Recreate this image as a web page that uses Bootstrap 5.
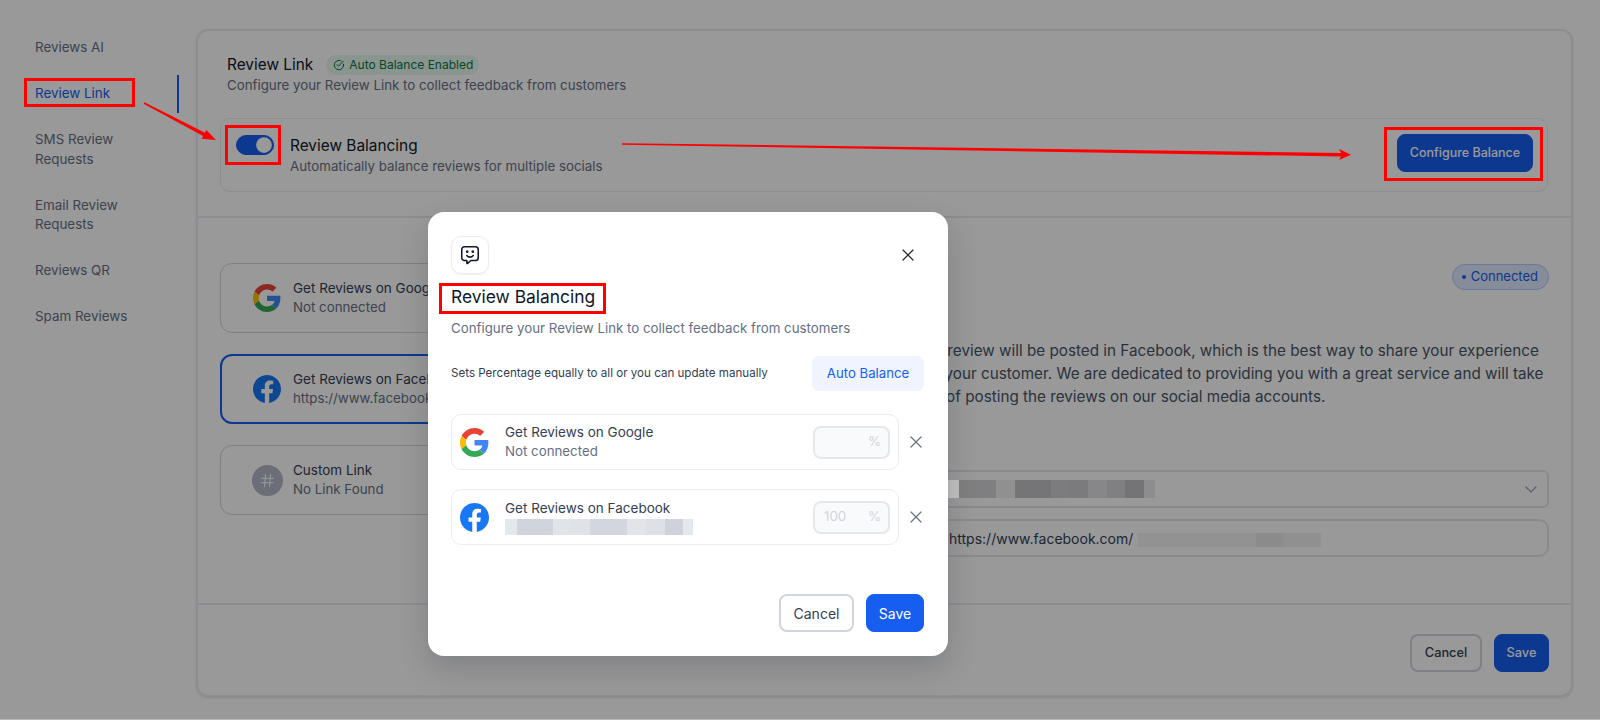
<!DOCTYPE html>
<html lang="en">
<head>
  <meta charset="UTF-8">
  <title>Review Balancing</title>
  <meta name="viewport" content="width=device-width, initial-scale=1">
  <link href="https://cdn.jsdelivr.net/npm/bootstrap@5.3.0/dist/css/bootstrap.min.css" rel="stylesheet">
  <style>
    body {
      font-family: "Inter", "Liberation Sans", sans-serif;
      background: #fff;
      height: 720px;
      overflow: hidden;
      position: relative;
      color: #101828;
    }
    /* sidebar */
    .side-col { width: 196px; flex: none; padding: 29px 17px 0 35px; gap: 8.5px; }
    .side-col .nav-link {
      padding: 9px 34px 9px 0;
      font-size: 13.4px;
      line-height: 19.5px;
      font-weight: 400;
      color: #667085;
      border-right: 2px solid transparent;
    }
    .side-col .nav-link.active { color: #155eef; border-right-color: #155eef; }
    /* main panel */
    .main-panel {
      width: 1377px;
      height: 668px;
      margin-top: 29px;
      border: 2px solid #eaecf0;
      border-radius: 12px;
      box-shadow: 0 1px 2px rgba(16, 24, 40, .12);
    }
    .top-part { padding: 24px 23px 24px 22px; border-bottom: 2px solid #eaecf0; }
    .head-title { font-size: 15.4px; line-height: 20px; font-weight: 400; margin-left: 7px; }
    .head-sub { font-size: 13.3px; line-height: 20px; color: #667085; margin-left: 7px; }
    .auto-pill {
      height: 20px;
      padding: 0 6px 0 7px;
      margin-left: 13px;
      font-size: 12px;
      font-weight: 400;
      border-radius: 10px;
      background: #e8f8ee;
      color: #067647;
    }
    .balance-box {
      height: 74px;
      margin-top: 23px;
      padding: 0 14px 0 15px;
      border: 1px solid #eaecf0;
      border-radius: 10px;
    }
    .balance-box .form-check-input {
      width: 38px;
      height: 20px;
      margin: 0 16px 20px 0;
      float: none;
      background-color: #155eef;
      border-color: #155eef;
    }
    .balance-box .form-switch .form-check-input:checked {
      --bs-form-switch-bg: url("data:image/svg+xml,%3csvg xmlns='http://www.w3.org/2000/svg' viewBox='-4 -4 8 8'%3e%3ccircle r='3.5' fill='%23fff'/%3e%3c/svg%3e");
    }
    .balance-box .form-switch { padding: 0; min-height: 0; margin: 0; }
    .bal-text { margin-top: 2px; }
    .bal-title { font-size: 15.4px; line-height: 21px; font-weight: 400; }
    .bal-sub { font-size: 13.3px; line-height: 21px; color: #667085; }
    .btn-blue {
      background: #155eef;
      border: 1px solid #155eef;
      color: #fff;
      font-size: 14px;
      font-weight: 500;
      height: 38px;
      border-radius: 8px;
      padding: 0;
    }
    .btn-plain {
      background: #fff;
      border: 2px solid #d0d5dd;
      color: #344054;
      font-size: 14px;
      font-weight: 500;
      height: 38px;
      border-radius: 8px;
      padding: 0;
    }
    .btn-config { width: 136px; font-size: 12.5px; margin-bottom: 4px; }
    .mid-part { padding: 45px 22px 0 22px; gap: 20px; }
    .left-list { width: 668px; flex: none; gap: 21px; }
    .src-card {
      height: 70px;
      padding-left: 30px;
      gap: 10px;
      border: 1px solid #d0d5dd;
      border-radius: 12px;
    }
    .src-card.picked { border: 2px solid #155eef; padding-left: 29px; }
    .icon-slot { width: 32px; flex: none; }
    .src-name { font-size: 13.5px; line-height: 19px; font-weight: 400; color: #344054; }
    .src-info { font-size: 13.3px; line-height: 19px; color: #667085; }
    .hash-dot { width: 31px; height: 31px; border-radius: 50%; background: #b3b8c5; }
    .right-col { flex: 1; min-width: 0; padding-top: 1px; }
    .conn-pill {
      height: 26px;
      padding: 0 10px 0 9px;
      font-size: 13px;
      font-weight: 400;
      border-radius: 13px;
      background: #e0e9ff;
      border: 1px solid #b2ccff;
      color: #155eef;
    }
    .conn-dot { width: 4px; height: 4px; border-radius: 50%; background: #155eef; margin-right: 5px; }
    .about-text {
      margin: 49px 0 0 2px;
      font-size: 15.25px;
      line-height: 23px;
      color: #475467;
      white-space: nowrap;
    }
    .fake-select {
      height: 38px;
      margin-top: 62px;
      padding: 0 10px 0 0;
      border: 2px solid #e4e7ec;
      border-radius: 6px;
      background-image: none;
    }
    .select-blur {
      width: 196px;
      height: 18px;
      margin-left: 49px;
      background: linear-gradient(90deg,
        #d4d4d8 0 37px, #f0f0f2 37px 56px, #c3c3c8 56px 92px, #cfcfd2 92px 110px,
        #cdcdd1 110px 129px, #e2e2e5 129px 148px, #d5d5d9 148px 166px, #c1c1c6 166px 185px, #ececee 185px 196px);
    }
    .fake-input {
      height: 38px;
      margin-top: 11px;
      padding: 0 0 0 39px;
      border: 2px solid #e4e7ec;
      border-radius: 10px;
      font-size: 14px;
      color: #344054;
    }
    .url-blur {
      width: 183px;
      height: 14px;
      margin: 3px 0 0 5px;
      background: linear-gradient(90deg, #f3f3f3 0 118px, #e8e8e8 118px 145px, #f0f0f0 145px 183px);
    }
    .foot-part { padding: 29px 22px 0 0; border-top: 2px solid #eaecf0; gap: 12px; height: 92px; }
    .foot-part .btn { font-size: 12.8px; }
    .foot-part .btn-plain { width: 72px; }
    .foot-part .btn-blue { width: 55px; }
    /* dim layer and modal */
    .dim-layer { position: absolute; inset: 0; background: rgba(0, 0, 0, .4); }
    .edge-line { position: absolute; left: 0; right: 0; bottom: 0; height: 1px; background: #b8b8b8; }
    .leak-bit { position: absolute; left: 948px; top: 480px; width: 11px; height: 18px; background: #c0c0c0; }
    .modal-spot { position: absolute; left: 428px; top: 212px; width: 520px; height: 444px; }
    .modal-spot .modal-content {
      height: 100%;
      padding: 24px 24px 24px 23px;
      background: #fff;
      border: 0;
      border-radius: 16px;
      box-shadow: 0 12px 30px rgba(16, 24, 40, .18);
    }
    .smile-box {
      width: 38px;
      height: 38px;
      border: 1px solid #eaecf0;
      border-radius: 10px;
      box-shadow: 0 1px 2px rgba(16, 24, 40, .06);
    }
    .x-btn { background: none; border: 0; padding: 0; margin-right: 10px; line-height: 0; }
    .dlg-title { font-size: 17.4px; line-height: 26px; font-weight: 400; margin: 10px 0 0; color: #101828; }
    .dlg-sub { font-size: 13.3px; line-height: 20px; color: #667085; margin-top: 8px; }
    .auto-row { margin-top: 18px; }
    .auto-text { font-size: 11.6px; font-weight: 400; color: #344054; }
    .btn-soft {
      height: 35px;
      width: 112px;
      padding: 0;
      background: #eff4ff;
      border: 0;
      border-radius: 8px;
      color: #155eef;
      font-size: 13.2px;
      font-weight: 400;
    }
    .rows-wrap { margin-top: 23px; gap: 19px; }
    .pct-row { height: 56px; width: 448px; padding: 0 8px; gap: 16px; border: 1px solid #eaecf0; border-radius: 10px; }
    .pct-row-icon { width: 29px; height: 29px; flex: none; }
    .pct-box {
      width: 77px;
      height: 33px;
      padding: 0 7px 0 9px;
      font-size: 13.3px;
      color: #d0d5dd;
      background: #f9fafb;
      border: 2px solid #e4e7ec;
      border-radius: 8px;
    }
    .name-blur {
      width: 188px;
      height: 16px;
      margin-top: 1px;
      background: linear-gradient(90deg,
        #e4e7ec 0 12px, #d0d4dc 12px 48px, #e0e3e8 48px 66px, #dfe2e7 66px 85px, #d2d6de 85px 122px,
        #e1e4e9 122px 141px, #dde0e6 141px 160px, #cfd2da 160px 178px, #e4e7ec 178px 188px);
    }
    .row-x { margin-left: 11px; line-height: 0; color: #667085; }
    .dlg-foot { gap: 12px; }
    .dlg-foot .btn { font-weight: 400; }
    .dlg-foot .btn-plain { width: 75px; }
    .dlg-foot .btn-blue { width: 58px; }
    .marks { position: absolute; left: 0; top: 0; pointer-events: none; }
  </style>
</head>
<body>

<svg width="0" height="0" class="d-block position-absolute">
  <defs>
    <symbol id="g-logo" viewBox="0 0 48 48">
      <path fill="#EA4335" d="M24 9.5c3.54 0 6.71 1.22 9.21 3.6l6.85-6.85C35.9 2.38 30.47 0 24 0 14.62 0 6.51 5.38 2.56 13.22l7.98 6.19C12.43 13.72 17.74 9.5 24 9.5z"/>
      <path fill="#4285F4" d="M46.98 24.55c0-1.57-.15-3.09-.38-4.55H24v9.02h12.94c-.58 2.96-2.26 5.48-4.78 7.18l7.73 6c4.51-4.18 7.09-10.36 7.09-17.65z"/>
      <path fill="#FBBC05" d="M10.53 28.59c-.48-1.45-.76-2.99-.76-4.59s.27-3.14.76-4.59l-7.98-6.19C.92 16.46 0 20.12 0 24c0 3.88.92 7.54 2.56 10.78l7.97-6.19z"/>
      <path fill="#34A853" d="M24 48c6.48 0 11.93-2.13 15.89-5.81l-7.73-6c-2.15 1.45-4.92 2.3-8.16 2.3-6.26 0-11.57-4.22-13.47-9.91l-7.98 6.19C6.51 42.62 14.62 48 24 48z"/>
    </symbol>
    <symbol id="fb-logo" viewBox="0 0 24 24">
      <path fill="#1877F2" d="M24 12.073c0-6.627-5.373-12-12-12s-12 5.373-12 12c0 5.99 4.388 10.954 10.125 11.854v-8.385H7.078v-3.47h3.047V9.43c0-3.007 1.792-4.669 4.533-4.669 1.312 0 2.686.235 2.686.235v2.953H15.83c-1.491 0-1.956.925-1.956 1.874v2.25h3.328l-.532 3.47h-2.796v8.385C19.612 23.027 24 18.062 24 12.073z"/>
    </symbol>
    <symbol id="x-mark" viewBox="0 0 12 12">
      <path d="M1 1l10 10M11 1L1 11" fill="none" stroke="currentColor" stroke-width="1.2" stroke-linecap="round"/>
    </symbol>
  </defs>
</svg>

<div class="d-flex">
  <nav class="nav flex-column side-col">
    <a class="nav-link" href="#">Reviews AI</a>
    <a class="nav-link active" href="#">Review Link</a>
    <a class="nav-link" href="#">SMS Review Requests</a>
    <a class="nav-link" href="#">Email Review Requests</a>
    <a class="nav-link" href="#">Reviews QR</a>
    <a class="nav-link" href="#">Spam Reviews</a>
  </nav>

  <main class="main-panel d-flex flex-column">
    <section class="top-part">
      <div class="d-flex align-items-center">
        <span class="head-title">Review Link</span>
        <span class="auto-pill d-inline-flex align-items-center gap-1">
          <svg width="12" height="12" viewBox="0 0 12 12" fill="none" stroke="currentColor" stroke-width="1" stroke-linecap="round" stroke-linejoin="round"><path d="M10.6 5.2A4.7 4.7 0 1 1 8 1.8"/><path d="M4 5.6l1.6 1.6 4.6-5"/></svg>
          Auto Balance Enabled
        </span>
      </div>
      <div class="head-sub">Configure your Review Link to collect feedback from customers</div>
      <div class="balance-box d-flex align-items-center">
        <div class="form-check form-switch d-flex">
          <input class="form-check-input" type="checkbox" role="switch" checked>
        </div>
        <div class="bal-text flex-grow-1">
          <div class="bal-title">Review Balancing</div>
          <div class="bal-sub">Automatically balance reviews for multiple socials</div>
        </div>
        <button class="btn btn-blue btn-config" type="button">Configure Balance</button>
      </div>
    </section>

    <section class="mid-part d-flex flex-grow-1">
      <div class="left-list d-flex flex-column">
        <div class="src-card d-flex align-items-center">
          <div class="icon-slot d-flex justify-content-center"><svg width="28" height="28"><use href="#g-logo"/></svg></div>
          <div><div class="src-name">Get Reviews on Google</div><div class="src-info">Not connected</div></div>
        </div>
        <div class="src-card picked d-flex align-items-center">
          <div class="icon-slot d-flex justify-content-center"><svg width="28" height="28"><use href="#fb-logo"/></svg></div>
          <div><div class="src-name">Get Reviews on Facebook</div><div class="src-info">https://www.facebook.com</div></div>
        </div>
        <div class="src-card d-flex align-items-center">
          <div class="icon-slot d-flex justify-content-center">
            <div class="hash-dot d-flex align-items-center justify-content-center">
              <svg width="15" height="15" viewBox="0 0 15 15" fill="none" stroke="#fff" stroke-width="1.1" stroke-linecap="round"><path d="M5.5 1.5L4.5 13.5M10.5 1.5L9.5 13.5M1.8 5.2H13.6M1.4 9.8H13.2"/></svg>
            </div>
          </div>
          <div><div class="src-name">Custom Link</div><div class="src-info">No Link Found</div></div>
        </div>
      </div>

      <div class="right-col">
        <div class="d-flex justify-content-end">
          <span class="conn-pill d-inline-flex align-items-center"><span class="conn-dot"></span>Connected</span>
        </div>
        <p class="about-text">Your review will be posted in Facebook, which is the best way to share your experience<br>with your customer. We are dedicated to providing you with a great service and will take<br>care of posting the reviews on our social media accounts.</p>
        <div class="form-select fake-select d-flex align-items-center">
          <div class="select-blur"></div>
          <svg class="ms-auto" width="12" height="7" viewBox="0 0 12 7" fill="none" stroke="#98a2b3" stroke-width="1.2" stroke-linecap="round" stroke-linejoin="round"><path d="M1 1l5 5 5-5"/></svg>
        </div>
        <div class="fake-input d-flex align-items-center"><span>https://www.facebook.com/</span><span class="url-blur"></span></div>
      </div>
    </section>

    <section class="foot-part d-flex justify-content-end align-items-start">
      <button class="btn btn-plain" type="button">Cancel</button>
      <button class="btn btn-blue" type="button">Save</button>
    </section>
  </main>
</div>

<div class="dim-layer"></div>
<div class="edge-line"></div>
<div class="leak-bit"></div>

<div class="modal-spot">
  <div class="modal-content d-flex flex-column">
    <div class="d-flex justify-content-between align-items-center">
      <div class="smile-box d-flex align-items-center justify-content-center">
        <svg width="22" height="22" viewBox="0 0 24 24" fill="none" stroke="#101828" stroke-width="1.7" stroke-linecap="round" stroke-linejoin="round"><path d="M6 3h12a3 3 0 0 1 3 3v9a3 3 0 0 1-3 3h-5l-3.6 3.2a.5.5 0 0 1-.8-.4V18H6a3 3 0 0 1-3-3V6a3 3 0 0 1 3-3z"/><path d="M8.5 12.6c1 1.2 2.2 1.7 3.5 1.7s2.5-.5 3.5-1.7"/><circle cx="9" cy="8.4" r=".6" fill="#101828"/><circle cx="15" cy="8.4" r=".6" fill="#101828"/></svg>
      </div>
      <button class="x-btn" type="button" aria-label="Close"><svg width="12" height="12" class="text-dark"><use href="#x-mark"/></svg></button>
    </div>
    <h5 class="dlg-title">Review Balancing</h5>
    <div class="dlg-sub">Configure your Review Link to collect feedback from customers</div>

    <div class="auto-row d-flex justify-content-between align-items-center">
      <span class="auto-text">Sets Percentage equally to all or you can update manually</span>
      <button class="btn btn-soft" type="button">Auto Balance</button>
    </div>

    <div class="rows-wrap d-flex flex-column">
      <div class="d-flex align-items-center">
        <div class="pct-row d-flex align-items-center">
          <svg class="pct-row-icon"><use href="#g-logo"/></svg>
          <div class="flex-grow-1">
            <div class="src-name">Get Reviews on Google</div>
            <div class="src-info">Not connected</div>
          </div>
          <div class="pct-box d-flex justify-content-between align-items-center"><span></span><span>%</span></div>
        </div>
        <span class="row-x"><svg width="12" height="12"><use href="#x-mark"/></svg></span>
      </div>
      <div class="d-flex align-items-center">
        <div class="pct-row d-flex align-items-center">
          <svg class="pct-row-icon"><use href="#fb-logo"/></svg>
          <div class="flex-grow-1">
            <div class="src-name">Get Reviews on Facebook</div>
            <div class="name-blur"></div>
          </div>
          <div class="pct-box d-flex justify-content-between align-items-center"><span>100</span><span>%</span></div>
        </div>
        <span class="row-x"><svg width="12" height="12"><use href="#x-mark"/></svg></span>
      </div>
    </div>

    <div class="dlg-foot d-flex justify-content-end mt-auto">
      <button class="btn btn-plain" type="button">Cancel</button>
      <button class="btn btn-blue" type="button">Save</button>
    </div>
  </div>
</div>

<!-- red callouts drawn on top of the screenshot -->
<svg class="marks" width="1600" height="720" viewBox="0 0 1600 720">
  <g fill="none" stroke="#f00" stroke-width="3">
    <rect x="25.5" y="79.5" width="108" height="26"/>
    <rect x="226.5" y="126.5" width="53" height="37"/>
    <rect x="1385.5" y="128.5" width="156" height="51"/>
    <rect x="440.5" y="284.5" width="164" height="28"/>
  </g>
  <polygon fill="#f00" points="144.4,102.2 204.9,132.7 206.3,129.9 216,140 201.7,138.7 203.1,135.9 143.6,103.8"/>
  <polygon fill="#f00" points="622,143.2 1341,152.9 1339,149 1351,154.7 1339,160 1341,156.5 622,144.8"/>
</svg>

<script src="https://cdn.jsdelivr.net/npm/bootstrap@5.3.0/dist/js/bootstrap.bundle.min.js"></script>
</body>
</html>
